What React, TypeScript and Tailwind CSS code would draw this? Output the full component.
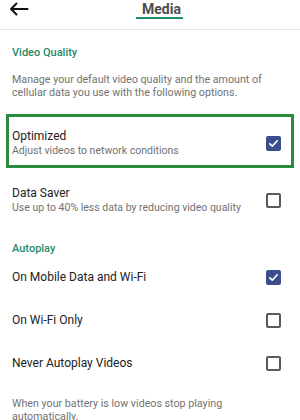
import React from "react";

const Checkbox = ({ checked }: { checked?: boolean }) =>
  checked ? (
    <div className="w-[15px] h-[15px] shrink-0 rounded-[2px] bg-[#3b4f8f] flex items-center justify-center">
      <svg width="11" height="11" viewBox="0 0 11 11" fill="none">
        <path d="M1.8 5.8 L4.3 8.2 L9.2 2.8" stroke="white" strokeWidth="1.7" strokeLinecap="round" strokeLinejoin="round" />
      </svg>
    </div>
  ) : (
    <div className="w-[15px] h-[15px] shrink-0 rounded-[2px] border-2 border-[#5a5a5a]" />
  );

const SectionTitle = ({ children, className }: { children: React.ReactNode; className?: string }) => (
  <div className={"px-[12px] text-[11px] leading-[14px] font-medium text-[#1f8c6c] " + (className ?? "")}>{children}</div>
);

const OptionRow = ({ title, sub, checked }: { title: string; sub?: string; checked?: boolean }) => (
  <div className="flex items-center justify-between">
    <div>
      <div className="text-[12px] leading-[15px] text-[#222]">{title}</div>
      {sub && <div className="text-[10.5px] leading-[13px] text-[#727272]">{sub}</div>}
    </div>
    <Checkbox checked={checked} />
  </div>
);

export default function App() {
  return (
    <div className="w-[300px] h-[420px] overflow-hidden bg-white font-['Roboto',sans-serif]">
      <header className="h-[30px] border-b border-[#e4e4e4] flex items-start">
        <svg className="ml-[9px] mt-[2px]" width="20" height="14" viewBox="0 0 20 14" fill="none">
          <path d="M18.5 7 H2 M7.5 1.5 L2 7 L7.5 12.5" stroke="#111" strokeWidth="2" strokeLinecap="round" strokeLinejoin="round" />
        </svg>
        <div className="ml-[107px] mt-[1.5px] pl-[6px] pr-[2px] border-b-2 border-[#1f8c6c] text-[14px] leading-[15px] font-bold text-[#4d4d4d]">
          Media
        </div>
      </header>

      <SectionTitle className="mt-[16px]">Video Quality</SectionTitle>
      <p className="mt-[14px] px-[12px] text-[10.7px] leading-[12.5px] text-[#727272]">
        Manage your default video quality and the amount of cellular data you use with the following options.
      </p>

      <div className="mt-[15px] mx-[6px] border-[3px] border-[#2b8c3e] pl-[3px] pr-[10px] pt-[12px] pb-[8px]">
        <OptionRow title="Optimized" sub="Adjust videos to network conditions" checked />
      </div>

      <div className="mt-[18px] pl-[12px] pr-[19px]">
        <OptionRow title="Data Saver" sub="Use up to 40% less data by reducing video quality" />
      </div>

      <SectionTitle className="mt-[28px]">Autoplay</SectionTitle>
      <div className="mt-[14px] pl-[12px] pr-[19px] flex flex-col gap-[28px]">
        <OptionRow title="On Mobile Data and Wi-Fi" checked />
        <OptionRow title="On Wi-Fi Only" />
        <OptionRow title="Never Autoplay Videos" />
      </div>

      <p className="mt-[27px] pl-[12px] pr-[40px] text-[10.7px] leading-[12.5px] text-[#727272]">
        When your battery is low videos stop playing automatically.
      </p>
    </div>
  );
}
